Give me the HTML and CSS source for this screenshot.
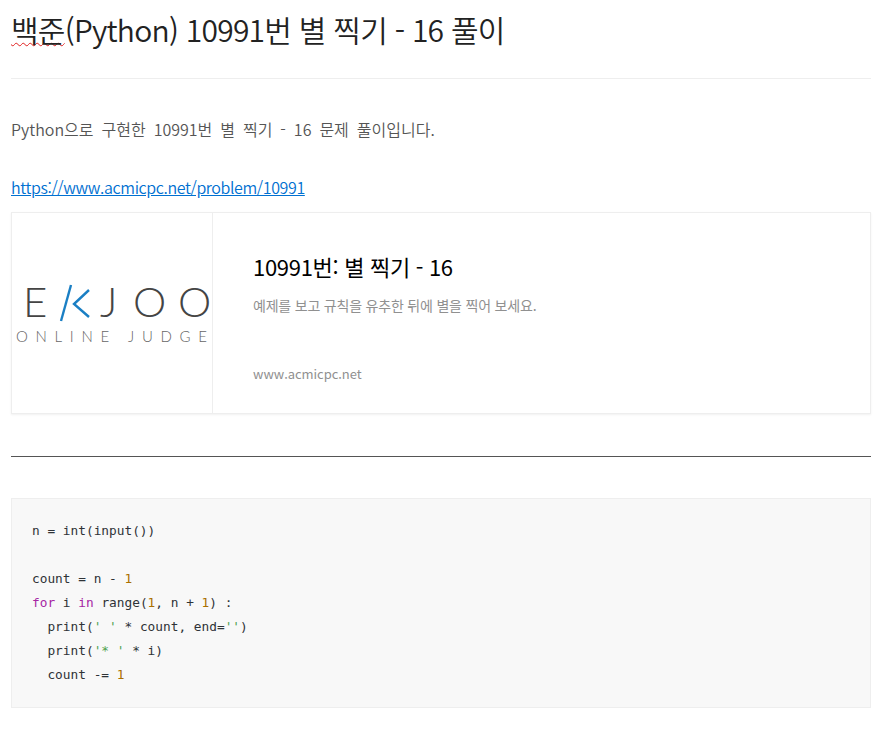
FILE: index.html
```html
<!DOCTYPE html>
<html lang="ko">
<head>
<meta charset="utf-8">
<title>백준(Python) 10991번 별 찍기 - 16 풀이</title>
<link rel="stylesheet" href="styles.css">
</head>
<body>
<main class="post">
  <h1 class="title"><span class="misspelt">백준</span>(Python) 10991번 별 찍기 - 16 풀이</h1>
  <p class="intro">Python으로 구현한 10991번 별 찍기 - 16 문제 풀이입니다.</p>
  <p class="link-line"><a href="#">https://www.acmicpc.net/problem/10991</a></p>
  <a class="card" href="#">
    <div class="card-thumb">
      <svg class="logo" width="200" height="200" viewBox="0 0 200 200">
        <text class="logo-big" x="11" y="104">E</text>
        <path class="logo-k" d="M59 72 L49 108"/>
        <path class="logo-k" d="M77 77 L62 91 L77 104"/>
        <text class="logo-big" x="88" y="104">J</text>
        <text class="logo-big" x="121" y="104">O</text>
        <text class="logo-big" x="166" y="104">O</text>
        <text class="logo-small" x="4" y="129" textLength="191">ONLINE JUDGE</text>
      </svg>
    </div>
    <div class="card-body">
      <div class="card-title">10991번: 별 찍기 - 16</div>
      <div class="card-desc">예제를 보고 규칙을 유추한 뒤에 별을 찍어 보세요.</div>
      <div class="card-host">www.acmicpc.net</div>
    </div>
  </a>
  <hr class="divider">
  <pre class="code"><code>n = int(input())

count = n - <span class="num">1</span>
<span class="kw">for</span> i <span class="kw">in</span> range(<span class="num">1</span>, n + <span class="num">1</span>) :
  print(<span class="str">' '</span> * count, end=<span class="str">''</span>)
  print(<span class="str">'* '</span> * i)
  count -= <span class="num">1</span></code></pre>
</main>
</body>
</html>
```
FILE: styles.css
```css
html, body {
  margin: 0;
  padding: 0;
  background: #fff;
}
body {
  font-family: "Noto Sans CJK KR", "Noto Sans", sans-serif;
  color: #555;
}
.post {
  padding: 0 16px 0 11px;
}
.title {
  margin: 0;
  height: 79px;
  box-sizing: border-box;
  padding-top: 7px;
  border-bottom: 1px solid #eee;
  font-size: 30px;
  line-height: 44px;
  font-weight: 350;
  color: #222;
  letter-spacing: -0.75px;
}
.misspelt {
  text-decoration: underline wavy #e02020 1px;
  text-underline-offset: 0;
}
.intro {
  margin: 0;
  padding-top: 38px;
  font-size: 16px;
  line-height: 24px;
  font-weight: 350;
  color: #555;
  word-spacing: 3.5px;
}
.link-line {
  margin: 0;
  padding-top: 34px;
  height: 37px;
  font-size: 16px;
  line-height: 24px;
  font-weight: 350;
  letter-spacing: -0.38px;
}
.link-line a {
  color: #0070d1;
}
.card {
  display: flex;
  height: 200px;
  border: 1px solid #eee;
  box-shadow: 0 1px 2px rgba(0, 0, 0, 0.06);
  color: inherit;
  text-decoration: none;
}
.card-thumb {
  flex: 0 0 200px;
  width: 200px;
  border-right: 1px solid #eee;
  overflow: hidden;
}
.logo {
  display: block;
}
.logo-big {
  font-family: "Lato", sans-serif;
  font-size: 42px;
  font-weight: 300;
  fill: #444;
}
.logo-small {
  font-family: "Lato", sans-serif;
  font-size: 15px;
  font-weight: 300;
  fill: #666;
}
.logo-k {
  fill: none;
  stroke: #1a7fc4;
  stroke-width: 2.4;
}
.card-body {
  flex: 1;
  padding: 37px 40px 0;
}
.card-title {
  font-size: 22px;
  line-height: 32px;
  font-weight: 400;
  color: #000;
  letter-spacing: -0.3px;
}
.card-desc {
  margin-top: 11px;
  font-size: 14px;
  line-height: 24px;
  font-weight: 400;
  color: #909090;
  letter-spacing: -0.2px;
}
.card-host {
  margin-top: 45px;
  font-size: 13px;
  line-height: 24px;
  font-weight: 400;
  color: #909090;
  letter-spacing: -0.05px;
}
.divider {
  margin: 42px 0 41px;
  border: 0;
  border-top: 1px solid #555;
}
.code {
  margin: 0;
  height: 210px;
  box-sizing: border-box;
  padding: 20px;
  background: #f8f8f8;
  border: 1px solid #eee;
  font-family: "DejaVu Sans Mono", monospace;
  font-size: 12.8px;
  line-height: 24px;
  color: #2f3337;
}
.code code {
  font-family: inherit;
  font-size: inherit;
}
.kw { color: #a626a4; }
.num { color: #aa6f00; }
.str { color: #50a14f; }
```
